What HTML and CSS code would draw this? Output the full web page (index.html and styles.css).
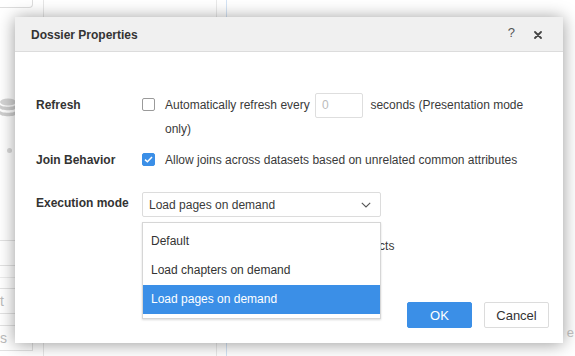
FILE: index.html
```html
<!DOCTYPE html>
<html>
<head>
<meta charset="utf-8">
<link rel="stylesheet" href="styles.css">
</head>
<body>
<div class="app">
  <div class="sidebar">
    <div class="sb-top"></div>
    <svg class="sb-db" width="16" height="20" viewBox="0 0 16 20">
      <ellipse cx="8" cy="4" rx="8" ry="3.5" fill="#d4d4d4"/>
      <path d="M0 6.5 C0 9.5 16 9.5 16 6.5 L16 10 C16 13 0 13 0 10 Z" fill="#cfcfcf"/>
      <path d="M0 12.5 C0 15.5 16 15.5 16 12.5 L16 16 C16 19 0 19 0 16 Z" fill="#cfcfcf"/>
    </svg>
    <div class="sb-dot"></div>
    <div class="sb-item sb-first"></div>
    <div class="sb-sep"></div>
    <div class="sb-item sb-second">t</div>
    <div class="sb-item sb-third">s</div>
  </div>
  <div class="canvas"></div>
  <div class="gutter"></div>
  <div class="rest"><span class="rest-text">e</span></div>
</div>

<div class="dialog">
  <div class="dlg-head">
    <span class="dlg-title">Dossier Properties</span>
    <span class="dlg-help">?</span>
    <svg class="dlg-close" width="8" height="8" viewBox="0 0 8 8">
      <path d="M1 1 L7 7 M7 1 L1 7" stroke="#444" stroke-width="1.8" stroke-linecap="round"/>
    </svg>
  </div>
  <div class="dlg-body">
    <div class="row row-refresh">
      <div class="label">Refresh</div>
      <div class="opt">
        <span class="cb"></span>
        <span class="opt-text">Automatically refresh every <span class="num">0</span> seconds (Presentation mode only)</span>
      </div>
    </div>
    <div class="row row-join">
      <div class="label">Join Behavior</div>
      <div class="opt">
        <span class="cb cb-on">
          <svg width="9" height="7" viewBox="0 0 9 7"><path d="M1 3.6 L3.4 5.8 L8 1" fill="none" stroke="#fff" stroke-width="1.5"/></svg>
        </span>
        <span class="opt-text">Allow joins across datasets based on unrelated common attributes</span>
      </div>
    </div>
    <div class="row row-exec">
      <div class="label">Execution mode</div>
      <div class="select-wrap">
        <div class="select">
          <span>Load pages on demand</span>
          <svg class="chev" width="10" height="6" viewBox="0 0 10 6"><path d="M0.8 0.8 L5 5 L9.2 0.8" fill="none" stroke="#555" stroke-width="1.1"/></svg>
        </div>
        <div class="menu">
          <div class="menu-item">Default</div>
          <div class="menu-item">Load chapters on demand</div>
          <div class="menu-item menu-item-active">Load pages on demand</div>
        </div>
      </div>
    </div>
    <div class="row row-extra">
      <div class="label"></div>
      <div class="opt">
        <span class="cb"></span>
        <span class="opt-text">Enable incremental fetch for all grid objects</span>
      </div>
    </div>
  </div>
  <div class="dlg-foot">
    <button class="btn btn-primary">OK</button>
    <button class="btn">Cancel</button>
  </div>
</div>
</body>
</html>
```

FILE: styles.css
```css
html, body {
  margin: 0;
  padding: 0;
}
body {
  width: 575px;
  height: 356px;
  overflow: hidden;
  position: relative;
  background: #fff;
  font-family: "Liberation Sans", Arial, sans-serif;
  font-size: 12px;
  color: #3a3a3a;
}
.app {
  display: flex;
  height: 356px;
}
.sidebar {
  width: 43px;
  border-right: 1px solid #e6e6e6;
  display: flex;
  flex-direction: column;
}
.sb-top {
  width: 32px;
  height: 7px;
  border-right: 1px solid #ddd;
  border-bottom: 1px solid #ddd;
  border-radius: 0 0 4px 0;
}
.sb-db {
  margin-top: 90px;
  margin-left: 0;
}
.sb-dot {
  width: 5px;
  height: 5px;
  border-radius: 50%;
  background: #d8d8d8;
  margin-top: 30px;
  margin-left: 7px;
}
.sb-item {
  height: 24px;
  border: 1px solid #e2e2e2;
  border-left: none;
  margin-right: 10px;
  font-size: 14px;
  color: #bbb;
  line-height: 24px;
}
.sb-first {
  margin-top: 87px;
}
.sb-sep {
  height: 11px;
  border-bottom: 1px solid #ececec;
}
.sb-second {
  margin-top: 10px;
}
.sb-third {
  margin-top: 11px;
}
.canvas {
  width: 172px;
  border-right: 1px solid #e9e9e9;
}
.gutter {
  width: 9px;
  border-right: 1px solid #d3e3f5;
}
.rest {
  flex: 1;
  display: flex;
  justify-content: flex-end;
  align-items: flex-end;
}
.rest-text {
  color: #c4c4c4;
  font-size: 13px;
  margin-bottom: 16px;
  margin-right: 1px;
}

/* dialog */
.dialog {
  position: absolute;
  left: 15px;
  top: 17px;
  width: 548px;
  height: 326px;
  background: #fff;
  box-shadow: 0 1px 16px rgba(0, 0, 0, 0.4);
  display: flex;
  flex-direction: column;
}
.dlg-head {
  height: 34px;
  background: #f0f0f0;
  border-bottom: 1px solid #dcdcdc;
  display: flex;
  align-items: center;
  padding-left: 16px;
  padding-right: 21px;
}
.dlg-title {
  font-weight: bold;
  color: #333;
  flex: 1;
  margin-top: 1px;
}
.dlg-help {
  font-size: 13px;
  color: #555;
  margin-right: 19px;
  margin-top: -4px;
}
.dlg-close {
  margin-top: 1px;
  margin-right: 0;
}
.dlg-body {
  flex: 1;
  padding: 41px 24px 0 21px;
  display: flex;
  flex-direction: column;
}
.row {
  display: flex;
  align-items: flex-start;
}
.label {
  width: 106px;
  flex: none;
  font-weight: bold;
  color: #333;
  line-height: 24px;
}
.opt {
  display: flex;
  align-items: flex-start;
  flex: 1;
}
.cb {
  width: 13px;
  height: 13px;
  box-sizing: border-box;
  border: 1px solid #9a9a9a;
  border-radius: 2px;
  margin-top: 5px;
  margin-right: 10px;
  flex: none;
  display: flex;
  align-items: center;
  justify-content: center;
}
.cb-on {
  background: #3b8fe7;
  border-color: #3b8fe7;
}
.opt-text {
  line-height: 24px;
}
.num {
  display: inline-block;
  box-sizing: border-box;
  width: 48px;
  height: 25px;
  line-height: 23px;
  border: 1px solid #dedede;
  border-radius: 2px;
  padding-left: 6px;
  color: #bbb;
  vertical-align: middle;
  margin: -2px 4px -2px 2px;
}
.row-join {
  margin-top: 7px;
}
.row-exec {
  margin-top: 20px;
}
.row-exec .label {
  line-height: 23px;
}
.select-wrap {
  position: relative;
  width: 239px;
}
.select {
  box-sizing: border-box;
  height: 25px;
  border: 1px solid #dcdcdc;
  border-radius: 2px;
  display: flex;
  align-items: center;
  justify-content: space-between;
  padding-left: 6px;
  padding-right: 9px;
}
.menu {
  position: absolute;
  left: 0;
  top: 30px;
  width: 239px;
  box-sizing: border-box;
  background: #fff;
  border: 1px solid #d6d6d6;
  box-shadow: 0 1px 2px rgba(0, 0, 0, 0.15);
  padding: 4px 0 4px;
  z-index: 2;
}
.menu-item {
  height: 29px;
  line-height: 29px;
  padding-left: 8px;
  color: #333;
}
.menu-item-active {
  background: #3b8fe7;
  color: #fff;
}
.row-extra {
  margin-top: 17px;
}
.dlg-foot {
  display: flex;
  justify-content: flex-end;
  gap: 12px;
  padding: 0 14px 15px 0;
}
.btn {
  width: 65px;
  height: 26px;
  box-sizing: border-box;
  border: 1px solid #dcdcdc;
  border-radius: 2px;
  background: #fff;
  font-family: "Liberation Sans", Arial, sans-serif;
  font-size: 13px;
  color: #333;
  padding: 0;
}
.btn-primary {
  background: #3b8fe7;
  border-color: #3b8fe7;
  color: #fff;
}
```
